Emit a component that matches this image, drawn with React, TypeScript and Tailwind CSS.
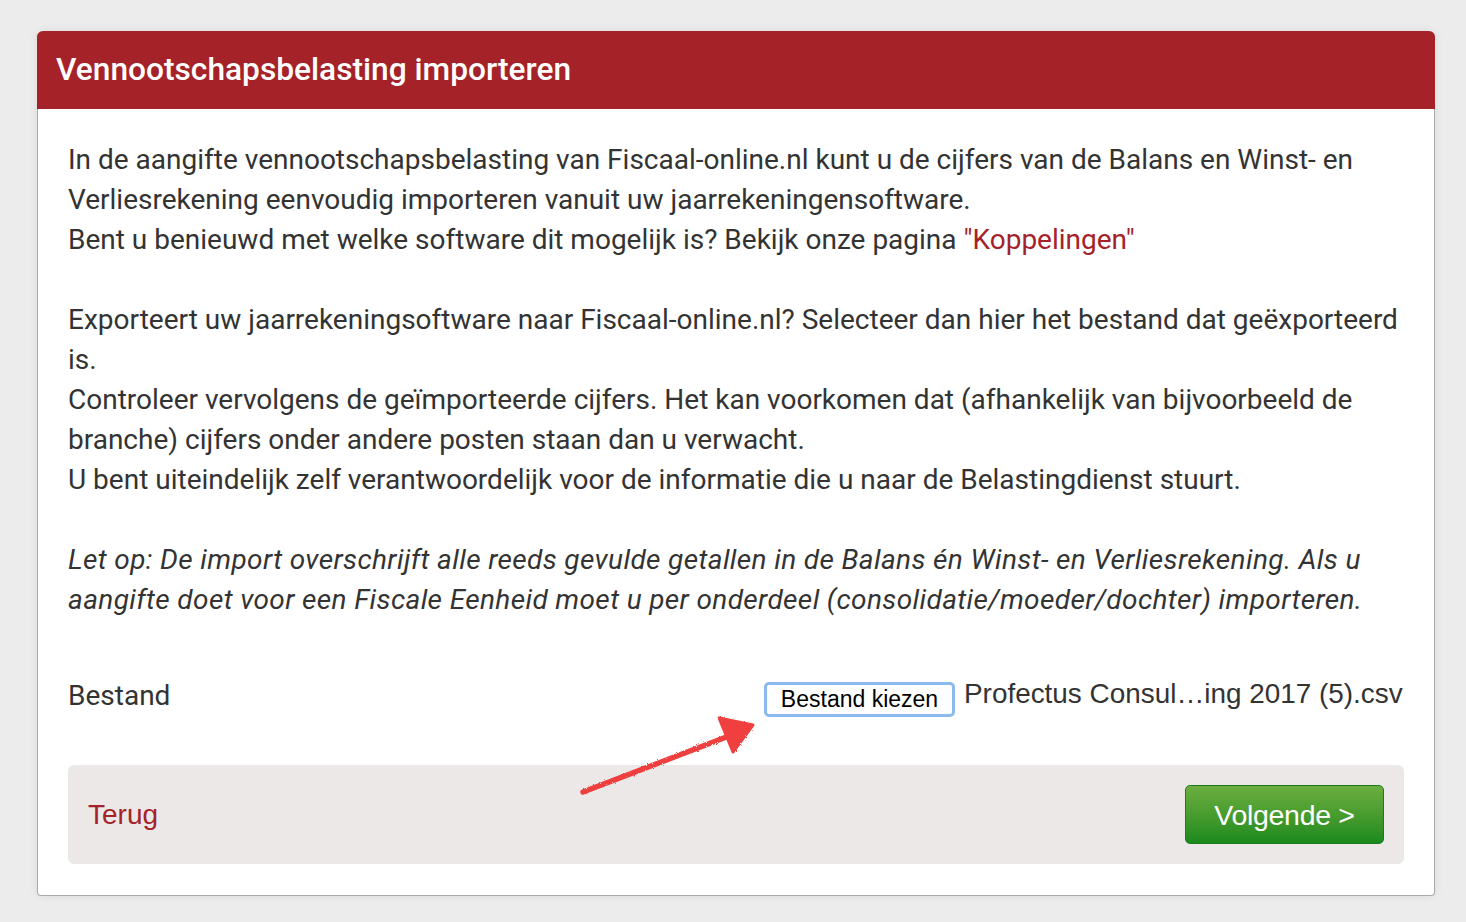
export default function App() {
  return (
    <div className="min-h-[922px] bg-[#ececec] pl-[37px] pr-[31px] pt-[31px] pb-[28px]" style={{ fontFamily: 'Roboto, "Liberation Sans", sans-serif' }}>
      <div className="relative rounded-t-[6px] rounded-b-[4px] bg-white border border-[#a9a9a9] border-t-0 shadow-[0_0_10px_rgba(0,0,0,0.08)]">
        <div className="h-[78px] bg-[#a52229] rounded-t-[6px] flex items-center pl-[19px] -mx-px">
          <h1 className="text-white text-[31.7px] font-medium -mt-px">Vennootschapsbelasting importeren</h1>
        </div>
        <div className="px-[30px] pt-[31px] pb-[31px] text-[#333] text-[28px] leading-[40px]">
          <p>
            In de aangifte vennootschapsbelasting van Fiscaal-online.nl kunt u de cijfers van de Balans en Winst- en Verliesrekening eenvoudig importeren vanuit uw jaarrekeningensoftware.
            <br />
            Bent u benieuwd met welke software dit mogelijk is? Bekijk onze pagina <a className="text-[#a52229]">"Koppelingen"</a>
          </p>
          <p className="mt-[40px]">
            Exporteert uw jaarrekeningsoftware naar Fiscaal-online.nl? Selecteer dan hier het bestand dat geëxporteerd is.
            <br />
            Controleer vervolgens de geïmporteerde cijfers. Het kan voorkomen dat (afhankelijk van bijvoorbeeld de branche) cijfers onder andere posten staan dan u verwacht.
            <br />
            U bent uiteindelijk zelf verantwoordelijk voor de informatie die u naar de Belastingdienst stuurt.
          </p>
          <p className="mt-[40px] italic tracking-[0.37px]">
            Let op: De import overschrijft alle reeds gevulde getallen in de Balans én Winst- en Verliesrekening. Als u aangifte doet voor een Fiscale Eenheid moet u per onderdeel (consolidatie/moeder/dochter) importeren.
          </p>
          <div className="mt-[54px] flex items-start">
            <div className="w-[696px] pt-[2px]">Bestand</div>
            <div className="flex items-start" style={{ fontFamily: '"Liberation Sans", Arial, sans-serif' }}>
              <button className="mt-[8px] h-[35px] w-[191px] rounded-[5px] border-[3px] border-[#8cb9ee] bg-white text-black text-[23px] leading-none">Bestand kiezen</button>
              <span className="ml-[9px] whitespace-nowrap text-[27.9px] leading-[40px] text-[#333]">Profectus Consul…ing 2017 (5).csv</span>
            </div>
          </div>
          <div className="mt-[48px] h-[99px] rounded-[6px] bg-[#ece8e8] flex items-center justify-between pl-[20px] pr-[20px]" style={{ fontFamily: '"Liberation Sans", Arial, sans-serif' }}>
            <a className="text-[#a52229] text-[28px]">Terug</a>
            <button className="h-[59px] w-[199px] rounded-[5px] border border-[#1d7a1d] bg-gradient-to-b from-[#6bae3f] to-[#178a1d] text-white text-[28.5px] tracking-[-0.3px]">Volgende &gt;</button>
          </div>
        </div>
        <svg className="absolute left-[523px] top-[669px]" width="220" height="110" viewBox="0 0 220 110">
          <defs>
            <filter id="rough">
              <feTurbulence type="fractalNoise" baseFrequency="0.9" numOctaves="2" result="n" />
              <feDisplacementMap in="SourceGraphic" in2="n" scale="2.5" />
            </filter>
          </defs>
          <g fill="#f03535" stroke="#f03535" strokeLinecap="round" strokeLinejoin="round" filter="url(#rough)" opacity="0.95">
            <path d="M22 92 L168 36" fill="none" strokeWidth="5.5" />
            <path d="M158 18 L192 25 L172 52 Z" strokeWidth="3" />
          </g>
        </svg>
      </div>
    </div>
  );
}
